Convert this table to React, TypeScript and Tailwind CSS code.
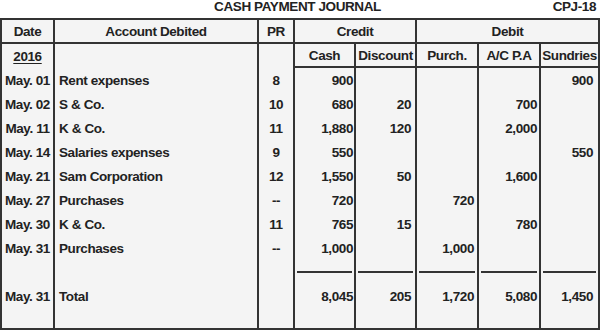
import React from "react";

const rows: string[][] = [
  ["May. 01", "Rent expenses", "8", "900", "", "", "", "900"],
  ["May. 02", "S & Co.", "10", "680", "20", "", "700", ""],
  ["May. 11", "K & Co.", "11", "1,880", "120", "", "2,000", ""],
  ["May. 14", "Salaries expenses", "9", "550", "", "", "", "550"],
  ["May. 21", "Sam Corporation", "12", "1,550", "50", "", "1,600", ""],
  ["May. 27", "Purchases", "--", "720", "", "720", "", ""],
  ["May. 30", "K & Co.", "11", "765", "15", "", "780", ""],
  ["May. 31", "Purchases", "--", "1,000", "", "1,000", "", ""],
];

const total = ["May. 31", "Total", "", "8,045", "205", "1,720", "5,080", "1,450"];

const align = [
  "text-center",
  "text-left pl-1",
  "text-center",
  "text-right pr-[1px]",
  "text-right pr-[4px]",
  "text-right pr-[3px]",
  "text-right pr-[2px]",
  "text-right pr-[5px] border-r-2",
];

export default function App() {
  return (
    <div
      className="w-[600px] h-[330px] bg-white text-[#222] font-bold text-[13.5px] tracking-[-0.4px]"
      style={{ fontFamily: '"Liberation Sans", Arial, sans-serif' }}
    >
      <div className="h-[18px] grid grid-cols-[1fr_auto_1fr] leading-[13px]">
        <div />
        <div className="pr-[5px]">CASH PAYMENT JOURNAL</div>
        <div className="text-right pr-[4px]">CPJ-18</div>
      </div>
      <div className="grid grid-cols-[53px_204px_36px_61px_61px_62px_62px_61px] border-t-2 border-b-2 border-[#333] bg-[#f4f4f4]">
        {/* header row 1 */}
        <div className="h-[24px] border-l-2 border-b-2 border-[#333] text-center leading-[22px] pt-px">Date</div>
        <div className="h-[24px] border-l-2 border-b-2 border-[#333] text-center leading-[22px] pt-px">Account Debited</div>
        <div className="h-[24px] border-l-2 border-b-2 border-[#333] text-center leading-[22px] pt-px">PR</div>
        <div className="col-span-2 h-[24px] border-l-2 border-b-2 border-[#333] text-center leading-[22px] pt-px">Credit</div>
        <div className="col-span-3 h-[24px] border-l-2 border-r-2 border-b-2 border-[#333] text-center leading-[22px] pt-px">Debit</div>
        {/* header row 2 */}
        <div className="h-[24px] border-l-2 border-[#333] text-center leading-[24px] pt-px">
          <span className="underline underline-offset-2">2016</span>
        </div>
        <div className="h-[24px] border-l-2 border-[#333]" />
        <div className="h-[24px] border-l-2 border-[#333]" />
        <div className="h-[24px] border-l-2 border-b-2 border-[#333] text-center leading-[22px] pt-px">Cash</div>
        <div className="h-[24px] border-l-2 border-b-2 border-[#333] text-center leading-[22px] pt-px">Discount</div>
        <div className="h-[24px] border-l-2 border-b-2 border-[#333] text-center leading-[22px] pt-px">Purch.</div>
        <div className="h-[24px] border-l-2 border-b-2 border-[#333] text-center leading-[22px] pt-px">A/C P.A</div>
        <div className="h-[24px] border-l-2 border-r-2 border-b-2 border-[#333] text-center leading-[22px] pt-px">Sundries</div>
        {/* data rows */}
        {rows.map((r, i) =>
          r.map((c, j) => (
            <div
              key={`${i}-${j}`}
              className={`h-[24px] border-l-2 border-[#333] leading-[24px] pt-px whitespace-nowrap ${align[j]}`}
            >
              {c}
            </div>
          ))
        )}
        {/* spacer with total lines */}
        {align.map((a, j) => (
          <div key={`s-${j}`} className={`h-[13px] border-l-2 border-[#333] ${j === 7 ? "border-r-2" : ""}`}>
            {j >= 3 ? <div className="mt-[11px] h-[2px] bg-[#333] mx-[2px]" /> : null}
          </div>
        ))}
        {/* total row */}
        {total.map((c, j) => (
          <div
            key={`t-${j}`}
            className={`h-[55px] border-l-2 border-[#333] leading-[24px] pt-[12px] whitespace-nowrap ${align[j]}`}
          >
            {c}
          </div>
        ))}
      </div>
    </div>
  );
}
